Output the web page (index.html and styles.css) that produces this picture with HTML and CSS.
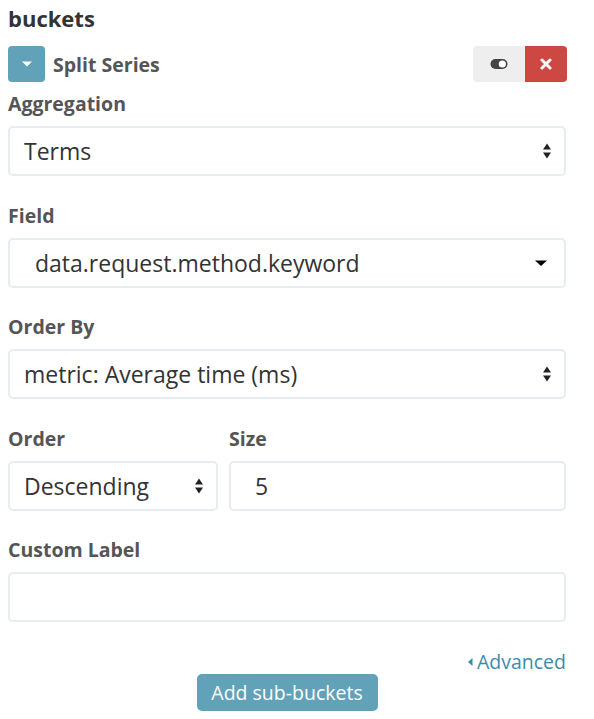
FILE: index.html
```html
<!DOCTYPE html>
<html>
<head>
<meta charset="utf-8">
<link rel="stylesheet" href="styles.css">
</head>
<body>
<div class="panel">
  <div class="heading">buckets</div>
  <div class="agg-header">
    <button class="toggle-btn" type="button">
      <svg width="12" height="8" viewBox="0 0 12 8"><path d="M1 1.5 L11 1.5 L6 6.5 Z" fill="#fff"/></svg>
    </button>
    <span class="agg-title">Split Series</span>
    <div class="actions">
      <button class="act act-toggle" type="button">
        <svg width="18" height="12" viewBox="0 0 18 12"><rect x="0.5" y="1" width="17" height="10" rx="5" fill="#444"/><circle cx="12.3" cy="6" r="3.6" fill="#fff"/></svg>
      </button>
      <button class="act act-remove" type="button">
        <svg width="12" height="12" viewBox="0 0 12 12"><path d="M2 2 L10 10 M10 2 L2 10" stroke="#fff" stroke-width="3" stroke-linecap="round"/></svg>
      </button>
    </div>
  </div>

  <div class="group">
    <div class="label">Aggregation</div>
    <div class="control select">
      <span class="val">Terms</span>
      <svg class="updown" width="10" height="18" viewBox="0 0 10 18"><path d="M1 7.5 L5 1.5 L9 7.5 Z M1 10.5 L5 16.5 L9 10.5 Z" fill="#222"/></svg>
    </div>
  </div>

  <div class="group">
    <div class="label">Field</div>
    <div class="control select uiselect">
      <span class="val">data.request.method.keyword</span>
      <svg class="caret" width="14" height="8" viewBox="0 0 14 8"><path d="M1 1.5 L13 1.5 L7 7 Z" fill="#000"/></svg>
    </div>
  </div>

  <div class="group">
    <div class="label">Order By</div>
    <div class="control select">
      <span class="val">metric: Average time (ms)</span>
      <svg class="updown" width="10" height="18" viewBox="0 0 10 18"><path d="M1 7.5 L5 1.5 L9 7.5 Z M1 10.5 L5 16.5 L9 10.5 Z" fill="#222"/></svg>
    </div>
  </div>

  <div class="group row">
    <div class="col col-order">
      <div class="label">Order</div>
      <div class="control select">
        <span class="val">Descending</span>
        <svg class="updown" width="10" height="18" viewBox="0 0 10 18"><path d="M1 7.5 L5 1.5 L9 7.5 Z M1 10.5 L5 16.5 L9 10.5 Z" fill="#222"/></svg>
      </div>
    </div>
    <div class="col col-size">
      <div class="label">Size</div>
      <div class="control input size-input"><span class="val">5</span></div>
    </div>
  </div>

  <div class="group">
    <div class="label">Custom Label</div>
    <div class="control input"></div>
  </div>

  <div class="advanced-row">
    <a class="advanced" href="#">
      <svg width="6" height="10" viewBox="0 0 6 10"><path d="M5.5 1 L5.5 9 L1 5 Z" fill="#3d8bab"/></svg>
      Advanced
    </a>
  </div>
  <div class="add-row">
    <button class="add-btn" type="button">Add sub-buckets</button>
  </div>
</div>
</body>
</html>
```

FILE: styles.css
```css
* { box-sizing: border-box; }
html, body { margin: 0; padding: 0; background: #fff; }
body {
  font-family: "Open Sans", "Noto Sans", "Liberation Sans", sans-serif;
  color: #444;
}
.panel {
  width: 558px;
  margin-left: 8px;
  padding-top: 6px;
}
.heading {
  font-size: 22px;
  font-weight: 700;
  line-height: 24px;
  color: #333;
  margin-bottom: 16px;
}
.agg-header {
  display: flex;
  align-items: center;
  height: 36px;
  margin-bottom: 10px;
}
.toggle-btn {
  width: 37px;
  height: 36px;
  border: none;
  border-radius: 4px;
  background: #62a2b8;
  padding: 0;
  display: flex;
  align-items: center;
  justify-content: center;
}
.agg-title {
  margin-left: 8px;
  font-size: 19.5px;
  font-weight: 700;
  color: #555;
}
.actions {
  margin-left: auto;
  margin-right: -1px;
  display: flex;
  height: 36px;
}
.act {
  border: none;
  padding: 0;
  height: 36px;
  display: flex;
  align-items: center;
  justify-content: center;
}
.act-toggle {
  width: 52px;
  background: #eeeeee;
  border-radius: 4px 0 0 4px;
}
.act-remove {
  width: 42px;
  background: #cd4843;
  border-radius: 0 4px 4px 0;
}
.group {
  margin-bottom: 27.5px;
}
.label {
  font-size: 19.5px;
  font-weight: 700;
  line-height: 24px;
  color: #555;
  margin-bottom: 10px;
}
.control {
  height: 50px;
  border: 2px solid #e8ecee;
  border-radius: 5px;
  background: #fff;
  display: flex;
  align-items: center;
  padding: 0 12px 0 14px;
  font-size: 23px;
  color: #333;
}
.control .val { flex: 1; white-space: nowrap; }
.uiselect { padding-left: 25px; padding-right: 16px; }
.row {
  display: flex;
  gap: 11px;
}
.col-order { width: 210px; }
.col-size { flex: 1; }
.size-input { padding-left: 24px; }
.advanced-row {
  display: flex;
  justify-content: flex-end;
  line-height: 24px;
}
.advanced {
  font-size: 19.5px;
  color: #3d8bab;
  text-decoration: none;
  display: flex;
  align-items: center;
  gap: 4px;
}
.add-row {
  display: flex;
  justify-content: center;
}
.add-btn {
  height: 37px;
  width: 181px;
  border: none;
  border-radius: 5px;
  background: #62a2b8;
  color: #fff;
  font-family: "Open Sans", "Noto Sans", "Liberation Sans", sans-serif;
  font-size: 19.5px;
  padding: 0;
}
```
